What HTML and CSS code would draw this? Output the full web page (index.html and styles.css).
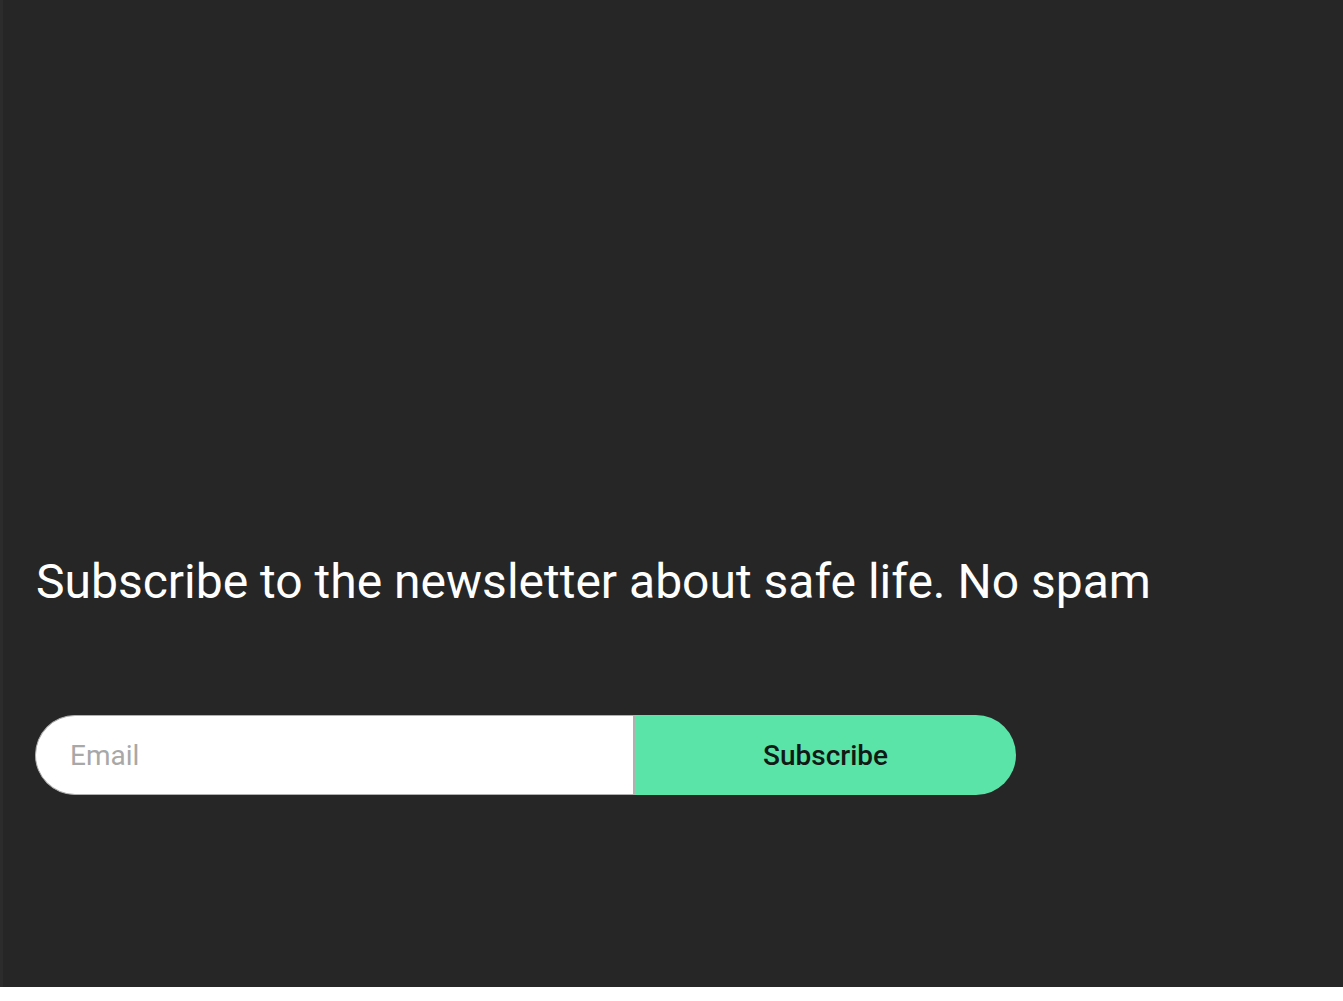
FILE: index.html
```html
<!DOCTYPE html>
<html lang="en">
<head>
<meta charset="utf-8">
<link rel="stylesheet" href="styles.css">
</head>
<body>
<section class="newsletter">
  <h2 class="title">Subscribe to the newsletter about safe life. No spam</h2>
  <form class="form">
    <input class="email" type="email" placeholder="Email">
    <button class="btn" type="button">Subscribe</button>
  </form>
</section>
</body>
</html>
```

FILE: styles.css
```css
html, body {
  margin: 0;
  padding: 0;
  background: #ffffff;
}
.newsletter {
  box-sizing: border-box;
  height: 987px;
  background: #262626;
  border-left: 3px solid #2c2c2c;
  padding: 552px 0 0 32px;
  font-family: Roboto, "Liberation Sans", sans-serif;
}
.title {
  margin: 0 0 0 1px;
  font-weight: 400;
  font-size: 48px;
  line-height: 60px;
  color: #ffffff;
}
.form {
  display: flex;
  margin-top: 103px;
  width: 981px;
  height: 80px;
}
.email {
  box-sizing: border-box;
  width: 600px;
  height: 80px;
  border: 1px solid #b0b0b0;
  border-right-width: 2px;
  border-radius: 40px 0 0 40px;
  background: #ffffff;
  padding: 0 0 0 34px;
  font-family: Roboto, "Liberation Sans", sans-serif;
  font-size: 28px;
  color: #333;
  outline: none;
}
.email::placeholder {
  color: #a8a8a8;
}
.btn {
  flex: 1;
  height: 80px;
  border: none;
  border-radius: 0 40px 40px 0;
  background: #5ae4a8;
  font-family: Roboto, "Liberation Sans", sans-serif;
  font-size: 28px;
  font-weight: 500;
  color: #111a14;
  cursor: pointer;
}
```
